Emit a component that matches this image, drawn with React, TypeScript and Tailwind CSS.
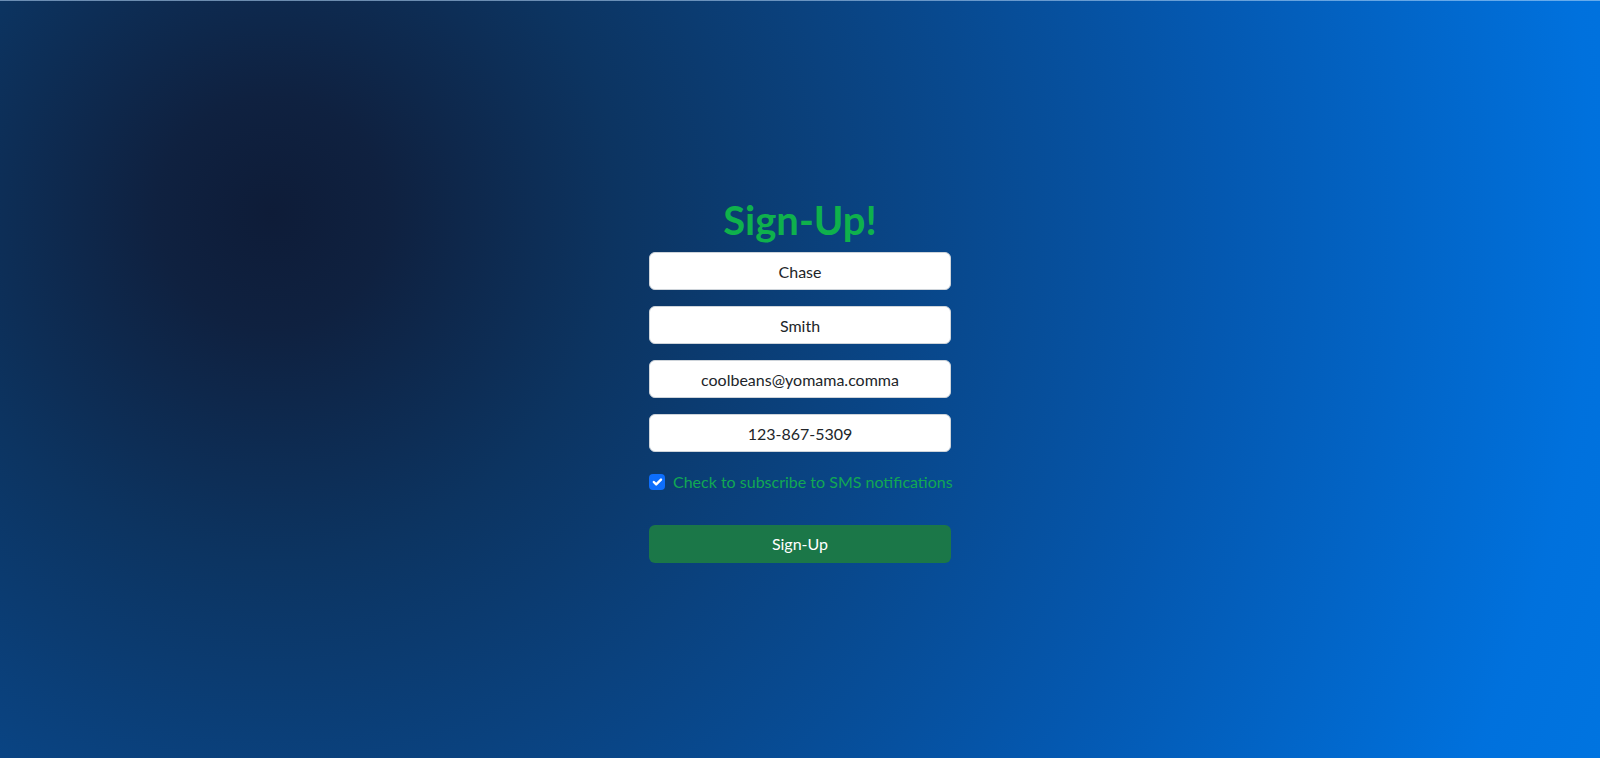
import React from "react";

const fields = ["Chase", "Smith", "coolbeans@yomama.comma", "123-867-5309"];

const App = () => {
  return (
    <div className="flex min-h-screen w-full items-center justify-center border-t border-white/40 bg-[radial-gradient(circle_at_17%_28%,#0e1c38_0%,#0f2140_8%,#0c3461_24%,#0a427f_40%,#0458b0_66%,#0071dd_92%,#0074e0_100%)] font-['Lato','Noto_Sans',sans-serif]">
      <form className="flex w-[302px] flex-col" onSubmit={(e) => e.preventDefault()}>
        <h1 className="mb-2 text-center text-[40px] font-bold leading-[48px] text-[#0fb14c]">
          Sign-Up!
        </h1>
        {fields.map((value, i) => (
          <input
            key={i}
            type="text"
            defaultValue={value}
            className="mb-4 h-[38px] w-full rounded-[6px] border border-[#ced4da] bg-white px-3 text-center text-base text-[#212529] outline-none"
          />
        ))}
        <label className="mt-[2px] flex h-6 items-center gap-2 whitespace-nowrap text-base text-[#12a853]">
          <span className="flex h-4 w-4 shrink-0 items-center justify-center rounded-[4px] bg-[#0d6efd]">
            <svg viewBox="0 0 20 20" className="h-4 w-4">
              <path
                d="m6 10 3 3 6-6"
                fill="none"
                stroke="#fff"
                strokeWidth="3"
                strokeLinecap="round"
                strokeLinejoin="round"
              />
            </svg>
          </span>
          Check to subscribe to SMS notifications
        </label>
        <button
          type="submit"
          className="mt-[31px] h-[38px] w-full rounded-[6px] bg-[#1b7748] text-base text-white"
        >
          Sign-Up
        </button>
      </form>
    </div>
  );
};

export default App;
